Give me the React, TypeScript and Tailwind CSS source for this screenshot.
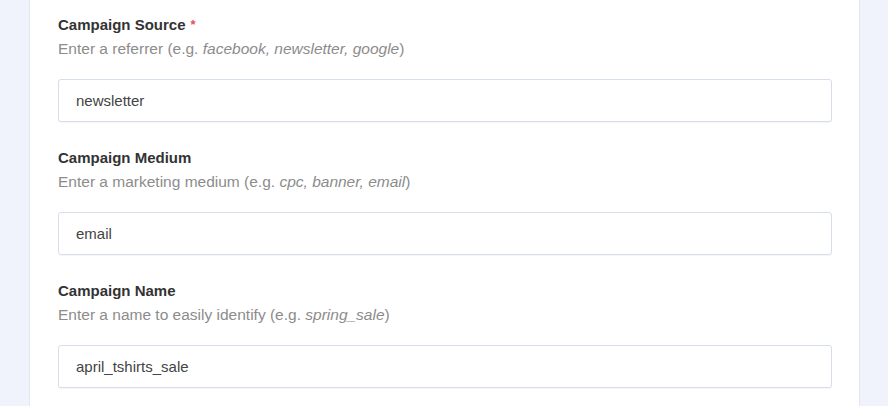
import React from 'react';

interface FieldProps {
  label: string;
  required?: boolean;
  help: React.ReactNode;
  value: string;
}

function Field({ label, required = false, help, value }: FieldProps) {
  return (
    <div className="flex flex-col">
      <label className="h-[20px] pt-[1px] text-[15px] leading-[20px] font-bold text-[#333333]">
        {label}
        {required && <span className="ml-[5px] text-[13px] text-[#e25555] align-top">*</span>}
      </label>
      <p className="mt-[5px] h-[20px] text-[15.5px] leading-[20px] text-[#8c8c8c]">{help}</p>
      <input
        readOnly
        value={value}
        className="mt-[20px] h-[43px] w-full rounded-[3px] border border-[#d5dee9] bg-white px-[17px] text-[15px] text-[#444444] shadow-[0_1px_1px_rgba(0,0,0,0.04)] outline-none"
      />
    </div>
  );
}

export default function App() {
  return (
    <div
      className="flex h-[406px] w-[888px] overflow-hidden bg-[#f0f3fc]"
      style={{ fontFamily: '"Liberation Sans", Arial, sans-serif' }}
    >
      <div className="ml-[29px] w-[831px] border-x border-[#e2e7f4] bg-white pl-[28px] pr-[27px] pt-[14px]">
        <div className="flex flex-col gap-[25px]">
          <Field
            label="Campaign Source"
            required
            value="newsletter"
            help={
              <>
                Enter a referrer (e.g. <i>facebook, newsletter, google</i>)
              </>
            }
          />
          <Field
            label="Campaign Medium"
            value="email"
            help={
              <>
                Enter a marketing medium (e.g. <i>cpc, banner, email</i>)
              </>
            }
          />
          <Field
            label="Campaign Name"
            value="april_tshirts_sale"
            help={
              <>
                Enter a name to easily identify (e.g. <i>spring_sale</i>)
              </>
            }
          />
        </div>
      </div>
    </div>
  );
}
